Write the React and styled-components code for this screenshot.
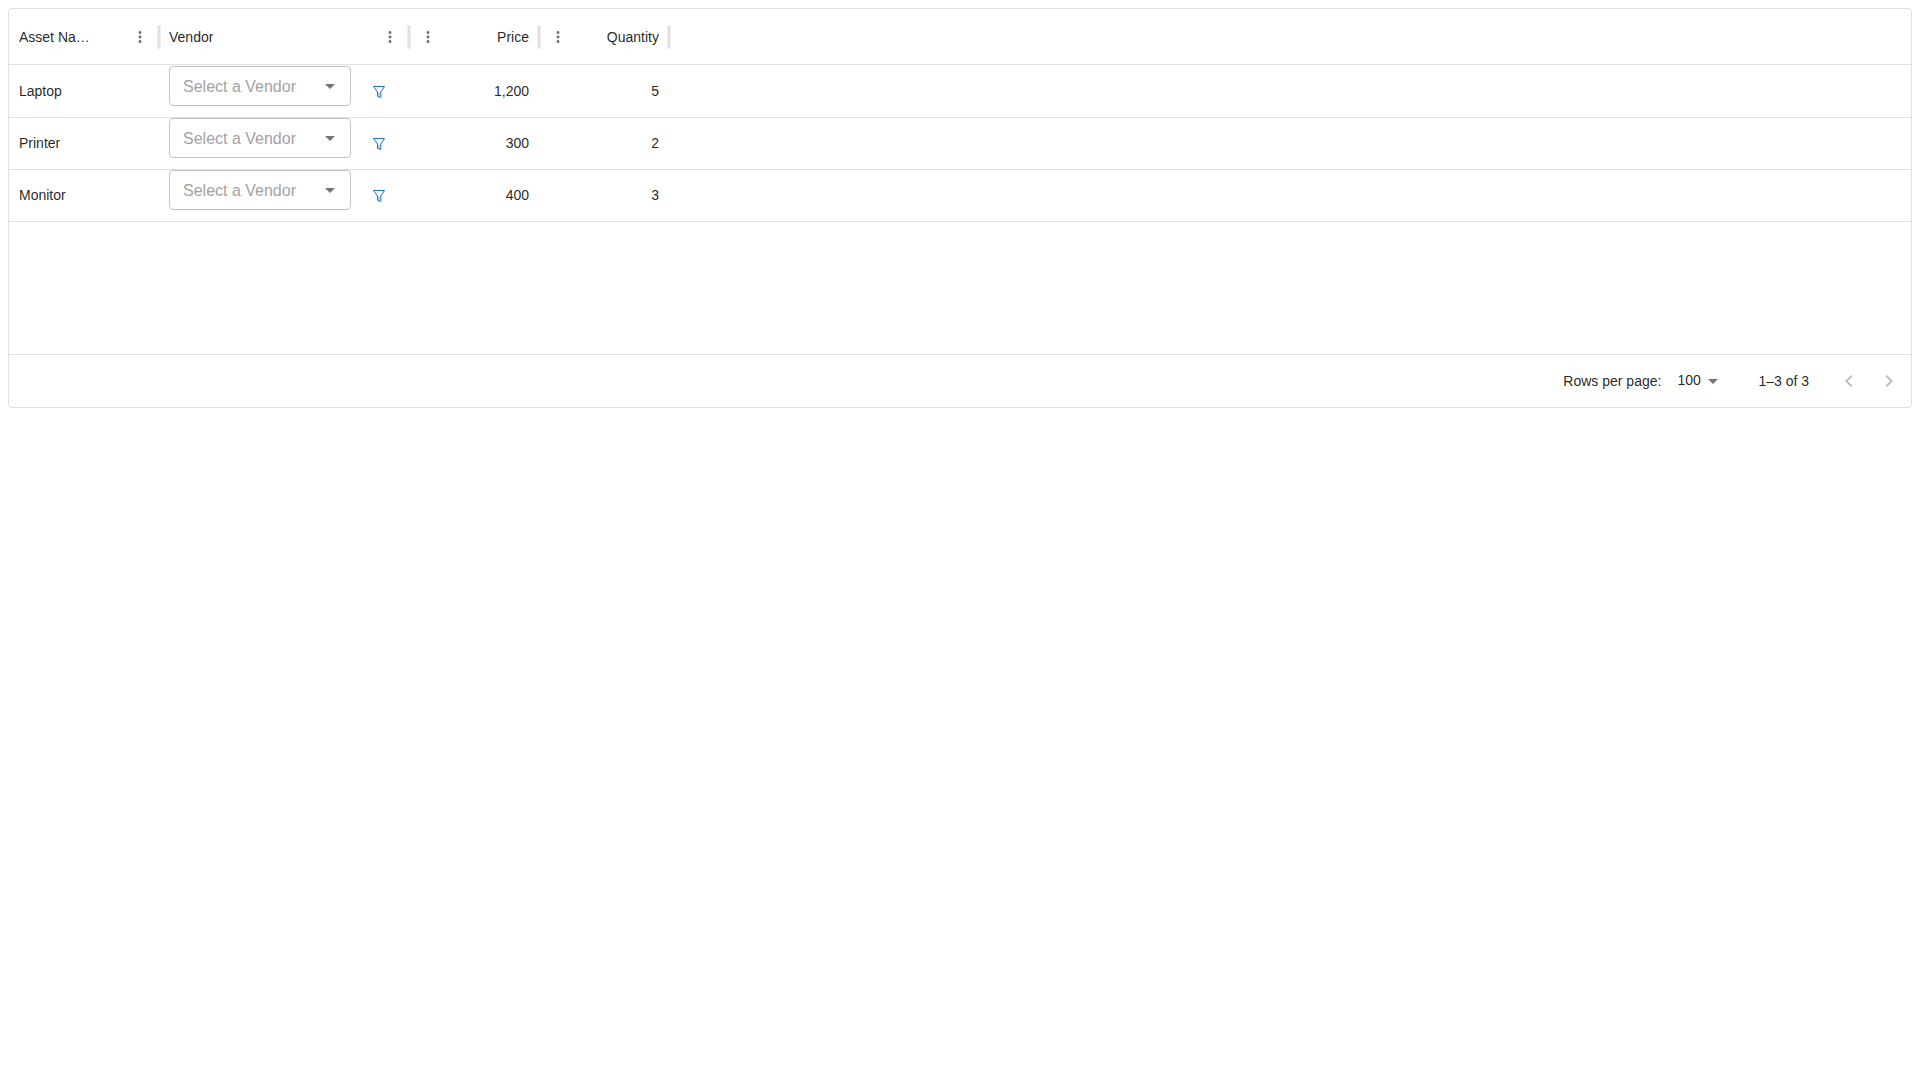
import React, { useState } from "react";
import styled, { createGlobalStyle } from "styled-components";
import {
  MdArrowDropDown,
  MdKeyboardArrowLeft,
  MdKeyboardArrowRight,
  MdMoreVert,
} from "react-icons/md";

const columns = [
  { field: "name", label: "Asset Name", width: 150 },
  { field: "vendor", label: "Vendor", width: 250 },
  { field: "price", label: "Price", width: 130, numeric: true },
  { field: "quantity", label: "Quantity", width: 130, numeric: true },
];

const assets = [
  { id: 1, name: "Laptop", price: 1200, quantity: 5 },
  { id: 2, name: "Printer", price: 300, quantity: 2 },
  { id: 3, name: "Monitor", price: 400, quantity: 3 },
];

const vendors = ["Vendor A", "Vendor B", "Vendor C"];

function FilterIcon() {
  return (
    <svg width="16" height="16" viewBox="0 0 16 16" aria-hidden="true">
      <path d="M6.6 8.6h2.8v4.6l-2.8-1z" fill="#cfcfcf" />
      <path
        d="M2.5 2.5h11L9.8 8v5.5L6.5 12.4V8z"
        fill="none"
        stroke="currentColor"
        strokeWidth="1"
        strokeLinejoin="round"
      />
    </svg>
  );
}

function VendorCell({ asset }) {
  const [vendor, setVendor] = useState("");

  return (
    <VendorWrapper>
      <SelectWrapper>
        <VendorSelect
          aria-label={`Vendor for ${asset}`}
          value={vendor}
          $empty={!vendor}
          onChange={(e) => setVendor(e.target.value)}
        >
          <option value="" disabled>Select a Vendor</option>
          {vendors.map((v) => (
            <option key={v} value={v}>{v}</option>
          ))}
        </VendorSelect>
        <SelectArrow $right={9}>
          <MdArrowDropDown size={24} />
        </SelectArrow>
      </SelectWrapper>
      <FilterButton type="button" aria-label={`Filter vendors for ${asset}`}>
        <FilterIcon />
      </FilterButton>
    </VendorWrapper>
  );
}

function App() {
  return (
    <>
      <GlobalStyle />
      <Grid>
        <Scroller>
          <Table>
            <colgroup>
              {columns.map((col) => (
                <Col key={col.field} $width={col.width} />
              ))}
              <col />
            </colgroup>
            <thead>
              <tr>
                {columns.map((col) => (
                  <HeaderCell key={col.field} scope="col">
                    <HeaderContent $numeric={col.numeric}>
                      <Title>{col.label}</Title>
                      <MenuButton type="button" aria-label={`${col.label} column menu`}>
                        <MdMoreVert size={18} />
                      </MenuButton>
                    </HeaderContent>
                    <Separator />
                  </HeaderCell>
                ))}
                <HeaderFiller />
              </tr>
            </thead>
            <tbody>
              {assets.map((row) => (
                <Row key={row.id}>
                  <Cell>{row.name}</Cell>
                  <Cell $top>
                    <VendorCell asset={row.name} />
                  </Cell>
                  <Cell $numeric>{row.price.toLocaleString("en-US")}</Cell>
                  <Cell $numeric>{row.quantity}</Cell>
                  <Cell />
                </Row>
              ))}
            </tbody>
          </Table>
        </Scroller>
        <Footer>
          <label htmlFor="page-size">Rows per page:</label>
          <PageSizeWrapper>
            <PageSizeSelect id="page-size" defaultValue="100">
              <option>25</option>
              <option>50</option>
              <option>100</option>
            </PageSizeSelect>
            <SelectArrow $right={0}>
              <MdArrowDropDown size={24} />
            </SelectArrow>
          </PageSizeWrapper>
          <span>1–3 of 3</span>
          <Pager>
            <PageButton type="button" disabled aria-label="Go to previous page">
              <MdKeyboardArrowLeft size={24} />
            </PageButton>
            <PageButton type="button" disabled aria-label="Go to next page">
              <MdKeyboardArrowRight size={24} />
            </PageButton>
          </Pager>
        </Footer>
      </Grid>
    </>
  );
}

const GlobalStyle = createGlobalStyle`
  *, *::before, *::after {
    box-sizing: border-box;
  }

  body {
    margin: 8px;
    background: #fff;
    font-family: "Liberation Sans", Arial, sans-serif;
  }

  button, select {
    font-family: inherit;
    margin: 0;
  }
`

const Grid = styled.div`
  display: flex;
  flex-direction: column;
  min-height: 400px;
  border: 1px solid #e0e0e0;
  border-radius: 4px;
  color: rgba(0, 0, 0, 0.87);
  font-size: 14px;
  line-height: 20px;
`

const Scroller = styled.div`
  flex: 1;
  overflow-x: auto;
`

const Table = styled.table`
  width: 100%;
  table-layout: fixed;
  border-collapse: separate;
  border-spacing: 0;
`

const Col = styled.col`
  width: ${(props) => props.$width}px;
`

const HeaderCell = styled.th`
  position: relative;
  height: 56px;
  padding: 0 10px;
  border-bottom: 1px solid #e0e0e0;
  font-weight: 400;
  text-align: left;
`

const HeaderFiller = styled.td`
  border-bottom: 1px solid #e0e0e0;
`

const HeaderContent = styled.div`
  display: flex;
  flex-direction: ${(props) => (props.$numeric ? "row-reverse" : "row")};
  align-items: center;
  justify-content: space-between;
`

const Title = styled.span`
  min-width: 0;
  max-width: 76px;
  overflow: hidden;
  text-overflow: ellipsis;
  white-space: nowrap;
`

const MenuButton = styled.button`
  display: flex;
  padding: 0;
  border: 0;
  background: none;
  color: rgba(0, 0, 0, 0.54);
  cursor: pointer;
`

/* sits on the edge between two header cells */
const Separator = styled.span`
  position: absolute;
  z-index: 1;
  top: 16px;
  right: -2px;
  width: 4px;
  height: 24px;
  border: solid #efefef;
  border-width: 0 1px;
  border-radius: 2px;
  background: #e0e0e0;
`

const Row = styled.tr`
  &:first-child td {
    border-top: 1px solid transparent;
    height: 53px;
  }
`

const Cell = styled.td`
  height: 52px;
  padding: ${(props) => (props.$top ? "0 10px" : "0 10px 2px")};
  border-bottom: 1px solid #e0e0e0;
  text-align: ${(props) => (props.$numeric ? "right" : "left")};
  vertical-align: ${(props) => (props.$top ? "top" : "middle")};
`

const VendorWrapper = styled.div`
  display: flex;
  align-items: flex-end;
  gap: 12px;
  height: 42px;
`

const SelectWrapper = styled.div`
  position: relative;
  align-self: flex-start;
  width: 182px;
`

const VendorSelect = styled.select`
  appearance: none;
  display: block;
  width: 100%;
  height: 40px;
  padding: 0 40px 0 13px;
  border: 1px solid #c4c4c4;
  border-radius: 4px;
  background: #fff;
  color: ${(props) => (props.$empty ? "#a2a2a2" : "rgba(0, 0, 0, 0.87)")};
  font-size: 16px;
  cursor: pointer;
`

const SelectArrow = styled.span`
  position: absolute;
  top: 0;
  bottom: 0;
  right: ${(props) => props.$right}px;
  display: flex;
  align-items: center;
  color: rgba(0, 0, 0, 0.54);
  pointer-events: none;
`

const FilterButton = styled.button`
  display: flex;
  padding: 8px;
  border: 0;
  border-radius: 50%;
  background: none;
  color: #1976d2;
  cursor: pointer;
`

const Footer = styled.div`
  display: flex;
  align-items: center;
  justify-content: flex-end;
  min-height: 53px;
  padding-right: 2px;
  border-top: 1px solid #e0e0e0;
`

const PageSizeWrapper = styled.div`
  position: relative;
  margin: 0 33px 0 8px;
`

const PageSizeSelect = styled.select`
  appearance: none;
  display: block;
  height: 24px;
  padding: 0 24px 2px 8px;
  border: 0;
  background: none;
  color: inherit;
  font-size: 14px;
  cursor: pointer;
`

const Pager = styled.div`
  display: flex;
  margin-left: 20px;
`

const PageButton = styled.button`
  display: flex;
  padding: 8px;
  border: 0;
  background: none;
  color: rgba(0, 0, 0, 0.26);
`

export default App;
